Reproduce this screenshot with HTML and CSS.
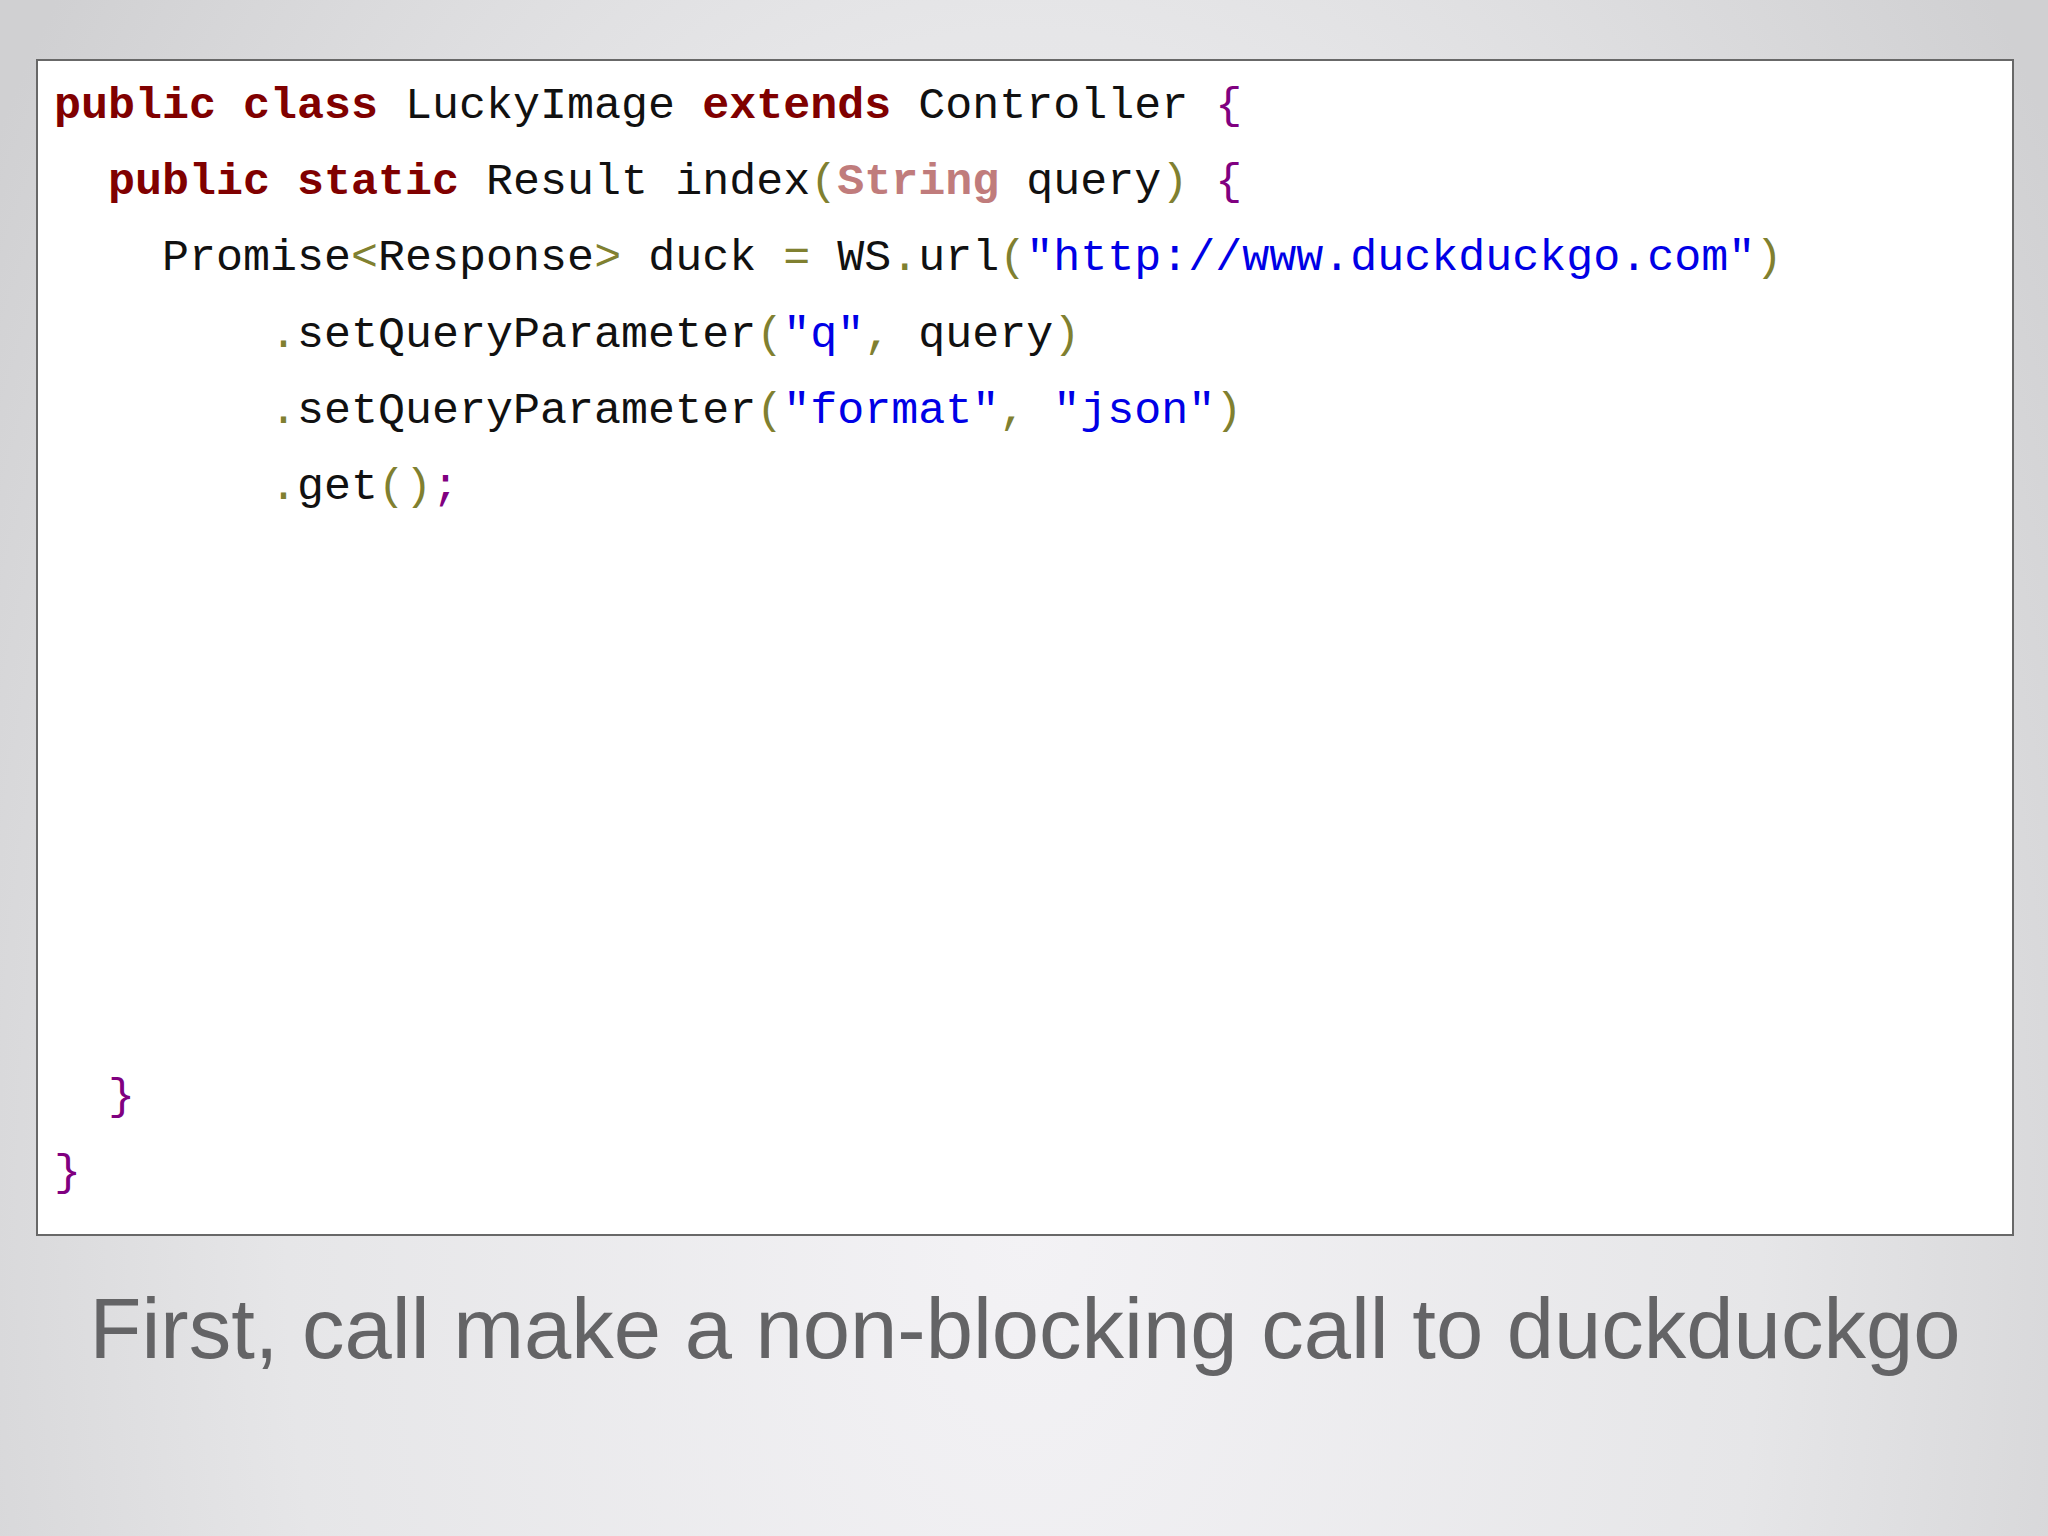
FILE: index.html
```html
<!DOCTYPE html>
<html lang="en">
<head>
<meta charset="utf-8">
<title>LuckyImage</title>
<link rel="stylesheet" href="styles.css">
</head>
<body>
<div class="slide">
<pre class="code"><span class="kw">public</span> <span class="kw">class</span> LuckyImage <span class="kw">extends</span> Controller <span class="br">{</span>
  <span class="kw">public</span> <span class="kw">static</span> Result index<span class="op">(</span><span class="ty">String</span> query<span class="op">)</span> <span class="br">{</span>
    Promise<span class="op">&lt;</span>Response<span class="op">&gt;</span> duck <span class="op">=</span> WS<span class="op">.</span>url<span class="op">(</span><span class="st">"http://www.duckduckgo.com"</span><span class="op">)</span>
        <span class="op">.</span>setQueryParameter<span class="op">(</span><span class="st">"q"</span><span class="op">,</span> query<span class="op">)</span>
        <span class="op">.</span>setQueryParameter<span class="op">(</span><span class="st">"format"</span><span class="op">,</span> <span class="st">"json"</span><span class="op">)</span>
        <span class="op">.</span>get<span class="op">()</span><span class="br">;</span>







  <span class="br">}</span>
<span class="br">}</span></pre>
<p class="caption">First, call make a non-blocking call to duckduckgo</p>
</div>
</body>
</html>
```

FILE: styles.css
```css
html, body {
  margin: 0;
  padding: 0;
}

.slide {
  width: 2048px;
  height: 1536px;
  box-sizing: border-box;
  padding: 59px 34px 0 36px;
  display: flex;
  flex-direction: column;
  background: radial-gradient(ellipse 60% 130% at 50% 80%, #f3f2f5 0%, #e6e6e8 60%, #d0d0d2 100%);
  overflow: hidden;
}

.code {
  margin: 0;
  padding: 8px 16px 22px 16px;
  border: 2px solid #686868;
  background: #ffffff;
  font-family: "Liberation Mono", "Courier New", monospace;
  font-size: 45px;
  line-height: 76.2px;
  color: #111111;
  white-space: pre;
}

.kw {
  color: #800000;
  font-weight: bold;
}

.ty {
  color: #c07c7c;
  font-weight: bold;
}

.op {
  color: #808030;
}

.br {
  color: #800080;
}

.st {
  color: #0000e6;
}

.caption {
  margin: 45px 0 0 0;
  font-family: "Liberation Sans", Arial, sans-serif;
  font-size: 85px;
  line-height: 96px;
  color: #646466;
  text-align: center;
  white-space: nowrap;
}
```
